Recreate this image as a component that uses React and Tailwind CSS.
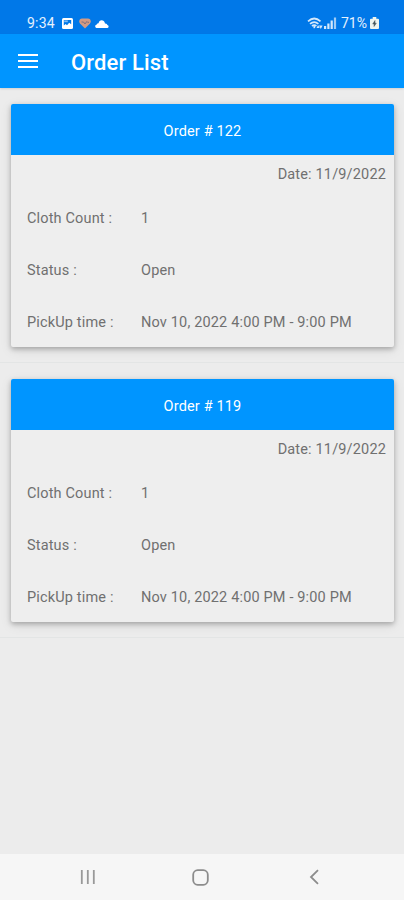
import React from 'react'

const orders = [
  { id: 122, date: '11/9/2022', count: 1, status: 'Open', pickup: 'Nov 10, 2022 4:00 PM - 9:00 PM' },
  { id: 119, date: '11/9/2022', count: 1, status: 'Open', pickup: 'Nov 10, 2022 4:00 PM - 9:00 PM' },
]

const StatusBar = () => {
  return (
    <div className="h-[34px] shrink-0 bg-[#0078e8] flex items-center justify-between pl-[27px] pr-[25px] pt-3 text-white/90">
      <div className="flex items-center">
        <span className="w-[28px] text-sm leading-none tracking-[0.2px] whitespace-nowrap">9:34</span>
        {/* Picture */}
        <svg className="ml-[7px] w-[11px] h-[11px]" viewBox="0 0 11 11">
          <rect width="11" height="11" rx="1.5" fill="#fff" />
          <path d="M1.8 2h7.4v4.2L7.2 4.7 5 7.2 3.6 6 1.8 7.6z" fill="#0078e8" />
          <path d="M2.2 2.4h3.6v1.8H2.2z" fill="#fff" opacity="0.5" />
        </svg>
        {/* Heart */}
        <svg className="ml-[6px] w-[12px] h-[11px]" viewBox="0 0 12 11">
          <path d="M6 10.6 1 5.5C-.6 3.5.5.6 3 .6h6c2.5 0 3.6 2.9 2 4.9z" fill="#d39a82" />
          <path d="M2.5 4h2L6 6l1.800-2.500.8.800H10" fill="none" stroke="#7d6f80" strokeWidth="1" />
        </svg>
        {/* Cloud */}
        <svg className="ml-[4px] w-[14px] h-[9px]" viewBox="0 0 14 9">
          <path d="M1.5 9C-.3 8.5-.2 6 1.5 5.7 2 4.5 3 4.2 3.6 4.2 4 .3 9.3.2 10 4.5 11.5 4.3 12.2 5.2 12.3 6 14 6.2 14 8.7 12.5 9z" fill="#fff" />
        </svg>
      </div>
      <div className="flex items-center">
        {/* Wifi */}
        <svg className="w-[16px] h-[13px]" viewBox="0 0 16 13" fill="none" stroke="#d5e8fb" strokeWidth="1.7">
          <path d="M1 4.3c4-3.6 8.500-3.6 12.500 0" />
          <path d="M3 6.8c2.700-2.300 5.700-2.300 8.400 0" />
          <path d="M5 9c1.400-1.200 3-1.200 4.400 0" />
          <path d="M7.300 9v2.200" />
          <path d="m9.500 11 1.600-3 1.600 3zM12 8.500h3.600L13.800 12z" fill="#d5e8fb" stroke="none" />
        </svg>
        {/* Signal */}
        <svg className="ml-px w-[13px] h-[12px]" viewBox="0 0 13 12" fill="#d5e8fb">
          <rect x="0" y="9" width="2.2" height="3" />
          <rect x="3.3" y="6.5" width="2.2" height="5.5" />
          <rect x="6.6" y="3.5" width="2.2" height="8.5" />
          <rect x="9.9" y="0.5" width="2.2" height="11.5" opacity="0.75" />
        </svg>
        <span className="ml-[4px] w-[28px] text-sm leading-none whitespace-nowrap">71%</span>
        {/* Battery */}
        <svg className="ml-px w-[9px] h-[12px]" viewBox="0 0 9 12">
          <path d="M2.7 0h3.6v1.8H8a1 1 0 0 1 1 1V11a1 1 0 0 1-1 1H1a1 1 0 0 1-1-1V2.8a1 1 0 0 1 1-1h1.7z" fill="#eef4ee" />
          <path d="M5 3.5 2.7 7H4.2L4 9.5 6.3 6.2H5z" fill="#44565c" stroke="#44565c" strokeWidth="0.5" />
        </svg>
      </div>
    </div>
  )
}

const Row = ({ label, value }) => {
  return (
    <div className="h-[52px] shrink-0 flex items-center pl-4">
      <span className="w-[114px] whitespace-nowrap">{label} :</span>
      <span className="whitespace-nowrap">{value}</span>
    </div>
  )
}

const OrderCard = ({ order }) => {
  return (
    <li className="h-[275px] py-4 pl-[11px] pr-[10px] border-b border-[#e3e5e5]">
      <div className="h-[243px] flex flex-col rounded-[2px] overflow-hidden bg-[#eeeeee] shadow-[0_2px_5px_rgba(0,0,0,0.25),0_3px_12px_rgba(0,0,0,0.1)]">
        <div className="h-[51px] shrink-0 flex items-center justify-center bg-[#0095ff] text-white pt-1">
          Order # {order.id}
        </div>
        <div className="h-[38px] shrink-0 flex items-center justify-end pr-2 pt-0.5">Date: {order.date}</div>
        <Row label="Cloth Count" value={order.count} />
        <Row label="Status" value={order.status} />
        <Row label="PickUp time" value={order.pickup} />
      </div>
    </li>
  )
}

const App = () => {
  return (
    <div className="w-full h-screen flex flex-col bg-[#ececec] font-['Roboto',sans-serif] overflow-hidden">
      <StatusBar />

      {/* App bar */}
      <header className="h-[54px] shrink-0 flex items-center bg-[#0095ff] text-white pl-[18px] shadow-[0_1px_2px_rgba(0,0,0,0.12)]">
        <button className="w-[20px] h-[14px] flex flex-col justify-between" aria-label="Menu">
          <span className="h-[2px] w-full bg-white" />
          <span className="h-[2px] w-full bg-white" />
          <span className="h-[2px] w-full bg-white" />
        </button>
        <h1 className="ml-[33px] pt-[3px] text-[22px] font-medium leading-none tracking-[0.15px]">Order List</h1>
      </header>

      {/* Orders */}
      <ul className="flex-1 text-[14.5px] tracking-[0.16px] text-[#707070]">
        {orders.map((order) => (
          <OrderCard key={order.id} order={order} />
        ))}
      </ul>

      {/* Navigation bar */}
      <nav className="h-[46px] shrink-0 bg-[#f6f6f6] flex items-center pl-[80px]">
        <svg className="w-[16px] h-[16px]" viewBox="0 0 16 16" stroke="#999" strokeWidth="1.8">
          <path d="M1.8 1v14M7.8 1v14M13.8 1v14" />
        </svg>
        <svg className="ml-[96px] w-[17px] h-[17px]" viewBox="0 0 17 17" fill="none" stroke="#8c8c8c" strokeWidth="1.8">
          <rect x="1.2" y="1.2" width="14.6" height="14.6" rx="4.5" />
        </svg>
        <svg className="ml-[100px] w-[11px] h-[16px]" viewBox="0 0 11 16" fill="none" stroke="#8c8c8c" strokeWidth="1.8">
          <path d="M9 1.2 2 8l7 6.8" />
        </svg>
      </nav>
    </div>
  )
}

export default App
